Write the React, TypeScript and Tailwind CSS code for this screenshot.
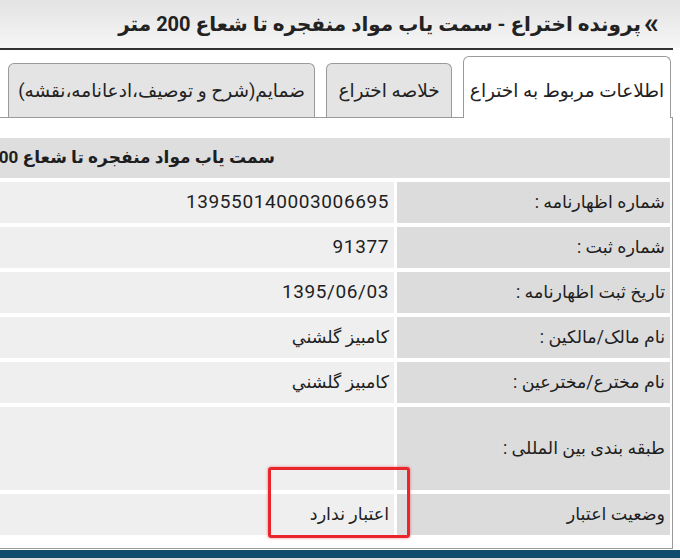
const rows = [
  { label: 'شماره اظهارنامه :', value: '13955014000300​6695', digits: true },
  { label: 'شماره ثبت :', value: '91377', digits: true },
  { label: 'تاریخ ثبت اظهارنامه :', value: '1395/06/03', digits: true },
  { label: 'نام مالک/مالکین :', value: 'کامبیز گلشني' },
  { label: 'نام مخترع/مخترعین :', value: 'کامبیز گلشني' },
]

const font = { fontFamily: 'Roboto, "DejaVu Sans", "Noto Sans", sans-serif' }

const Row = ({ label, value, digits, tall }: { label: string; value: string; digits?: boolean; tall?: boolean }) => (
  <div className={`flex gap-[3px] ${tall ? 'h-[83px]' : 'h-[41px]'}`}>
    <div className="flex w-[273px] shrink-0 items-center bg-[#dcdcdc] pr-[5px] text-[17.5px] text-[#1e1e1e]">{label}</div>
    <div
      className={`flex w-[394px] shrink-0 items-center bg-[#efefef] pr-[5px] text-[#1e1e1e] ${
        digits ? 'text-[19px] tracking-[0.6px]' : 'text-[17.5px]'
      }`}
    >
      {value}
    </div>
  </div>
)

const App = () => {
  return (
    <div dir="rtl" style={font} className="relative h-[560px] w-[680px] overflow-hidden bg-white">
      <header className="flex h-[48px] items-center bg-gradient-to-b from-[#e3e3e3] to-[#f6f6f6] pr-[21px]">
        <span className="ml-[3px] -mt-[3px] text-[30px] font-bold leading-none text-[#222]">»</span>
        <h1 className="whitespace-nowrap text-[20px] font-bold text-[#222]">
          پرونده اختراع - سمت یاب مواد منفجره تا شعاع 200 متر
        </h1>
      </header>
      <div className="mr-[7px] h-[2px] bg-[#333]" />

      <div className="mr-[9px] flex items-end gap-[11px] pt-[6px]">
        <div className="relative z-10 -mb-px flex h-[62px] w-[208px] items-center justify-center rounded-t-[6px] border border-b-0 border-[#9a9a9a] bg-white pt-[8px] text-[18.5px] text-[#222]">
          اطلاعات مربوط به اختراع
        </div>
        <div className="flex h-[54px] w-[126px] items-center justify-center rounded-t-[6px] border border-b-0 border-[#9a9a9a] bg-[#e4e4e4] pt-[2px] text-[18.5px] text-[#222]">
          خلاصه اختراع
        </div>
        <div className="flex h-[54px] w-[307px] items-center justify-center rounded-t-[6px] border border-b-0 border-[#9a9a9a] bg-[#e4e4e4] pt-[2px] text-[18.5px] text-[#222]">
          ضمایم(شرح و توصیف،ادعانامه،نقشه)
        </div>
      </div>

      <div className="mr-[7px] h-[432px] overflow-hidden border-y border-r border-[#9a9a9a] pt-[20px] pr-[2px]">
        <div className="flex flex-col gap-[4px]">
          <div className="flex h-[40px] items-center bg-[#dedede] pr-[395px]">
            <span className="whitespace-nowrap text-[17px] font-bold text-[#1e1e1e]">
              سمت یاب مواد منفجره تا شعاع 200 متر
            </span>
          </div>
          {rows.map((r) => (
            <Row key={r.label} {...r} />
          ))}
          <Row label="طبقه بندی بین المللی :" value="" tall />
          <Row label="وضعیت اعتبار" value="اعتبار ندارد" />
        </div>
      </div>

      <div className="mt-[1px] h-[8px] bg-[#0f4b6d]" />
      <div className="h-[2px] bg-[#dcdcdc]" />

      <div className="absolute left-[268px] top-[467px] h-[71px] w-[142px] rounded-[3px] border-[3px] border-[#e8262b] shadow-[0_0_3px_rgba(232,38,43,0.6)]" />
    </div>
  )
}

export default App
